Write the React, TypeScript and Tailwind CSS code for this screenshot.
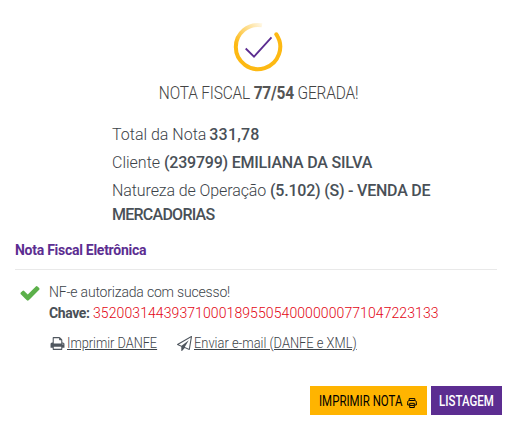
import React from 'react';

const CheckIcon = () => (
  <svg viewBox="0 0 1792 1792" className="w-[22px] h-[22px] shrink-0 fill-[#5cb04a]">
    <path d="M1671 566q0 40-28 68l-724 724-136 136q-28 28-68 28t-68-28l-136-136-362-362q-28-28-28-68t28-68l136-136q28-28 68-28t68 28l294 295 656-657q28-28 68-28t68 28l136 136q28 28 28 68z" />
  </svg>
);

const PrintIcon = () => (
  <svg viewBox="0 0 1792 1792" className="w-[15px] h-[15px] shrink-0 fill-[#4f565e]">
    <path d="M448 1536h896v-256h-896v256zm0-640h896v-384h-160q-40 0-68-28t-28-68v-160h-640v640zm1152 64q0-26-19-45t-45-19-45 19-19 45 19 45 45 19 45-19 19-45zm128 0v416q0 13-9.5 22.5t-22.5 9.5h-224v160q0 40-28 68t-68 28h-960q-40 0-68-28t-28-68v-160h-224q-13 0-22.5-9.5t-9.5-22.5v-416q0-79 56.5-135.5t135.5-56.5h64v-544q0-40 28-68t68-28h672q40 0 88 20t76 48l152 152q28 28 48 76t20 88v256h64q79 0 135.5 56.5t56.5 135.5z" />
  </svg>
);

const PlaneIcon = () => (
  <svg viewBox="0 0 1792 1792" className="w-[15px] h-[15px] shrink-0 fill-[#4f565e]">
    <path d="M1764 11q33 24 27 64l-256 1536q-5 29-32 45-14 8-31 8-11 0-24-5l-527-215-298 327q-18 21-47 21-14 0-23-4-19-7-30-23.5t-11-36.5v-452l-472-193q-37-14-40-55-3-39 32-59l1664-960q35-21 68 2zm-342 1499l221-1323-1434 827 336 137 863-639-478 797z" />
  </svg>
);

const SmallPrinter = () => (
  <svg viewBox="0 0 12 12" className="w-3 h-3 shrink-0 mt-[5px] fill-none stroke-black">
    <path d="M3.2 3.5V1.6h5.6v1.9M3 8H1.7V5.2c0-1 .6-1.7 1.6-1.7h5.4c1 0 1.6.7 1.6 1.7V8H9M3.7 6.3h4.6v4.2H3.7zM4 8.4h4" />
  </svg>
);

// Ring fades out towards its open end
const SuccessRing = () => (
  <svg viewBox="0 0 50 50" className="w-[50px] h-[50px] mr-0.5" fill="none">
    <defs>
      <linearGradient id="ring" x1="30" y1="3" x2="5" y2="24" gradientUnits="userSpaceOnUse">
        <stop offset="0" stopColor="#fdb913" stopOpacity="0.1" />
        <stop offset="1" stopColor="#fdb913" />
      </linearGradient>
    </defs>
    <path d="M29 3.3A22.2 22.2 0 0 0 2.8 25" stroke="url(#ring)" strokeWidth="4" />
    <path d="M2.8 25A22.2 22.2 0 1 0 43.3 12.3" stroke="#fdb913" strokeWidth="4" />
    <circle cx="43.3" cy="12.3" r="2" fill="#fdb913" />
    <path d="M12.7 26.5l8.3 8.2L38.5 15.3" stroke="#5c2d91" strokeWidth="1.8" />
  </svg>
);

const App: React.FC = () => {
  return (
    <main className="w-[517px] h-[426px] bg-white overflow-hidden font-['Roboto',sans-serif] text-[#495057]">
      <header className="flex flex-col items-center pt-[22px]">
        <SuccessRing />
        <h1 className="mt-[9px] origin-center scale-x-[.91] scale-y-105 text-[17px] leading-6 font-light text-[#444] whitespace-nowrap tracking-[-0.2px]">
          NOTA FISCAL <b className="font-bold text-[#555]">77/54</b> GERADA!
        </h1>
      </header>

      <section className="mt-[18px] ml-28 w-[350px] flex flex-col gap-1 text-base leading-6 font-light text-[#3c4349]">
        <p>Total da Nota <b className="-ml-px font-medium tracking-[0.2px] text-[#495057]">331,78</b></p>
        <p className="whitespace-nowrap">Cliente <b className="font-medium tracking-[-0.22px] text-[#495057]">(239799) EMILIANA DA SILVA</b></p>
        <p className="whitespace-nowrap">
          <span className="tracking-[-0.1px]">Natureza de Operação </span>
          <b className="font-medium tracking-[-0.22px] text-[#495057]">(5.102) (S) - VENDA DE<br /><span className="tracking-[-0.75px]">MERCADORIAS</span></b>
        </p>
      </section>

      <h2 className="ml-[15px] mr-5 mt-[11px] h-8 border-b border-[#e9e9e9] text-sm leading-6 font-bold tracking-[-0.27px] text-[#5c2d91]">
        Nota Fiscal Eletrônica
      </h2>

      <section className="flex gap-2 pl-[19px] pt-3">
        <CheckIcon />
        <div className="text-sm leading-[21px] font-light whitespace-nowrap text-[#3c4349]">
          <p className="tracking-[-0.18px]">NF-e autorizada com sucesso!</p>
          <p><b className="inline-block w-11 font-bold tracking-[-0.4px] text-[#495057]">Chave:</b><span className="text-[#e30613] tracking-[0.09px]">35200314439371000189550540000000771047223133</span></p>
          <div className="mt-[9px] ml-px flex">
            <a className="flex items-center gap-0.5 w-[127px]">
              <PrintIcon /><u className="origin-left scale-x-[.91]">Imprimir DANFE</u>
            </a>
            <a className="flex items-center gap-0.5">
              <PlaneIcon /><u className="origin-left scale-x-[.92]">Enviar e-mail (DANFE e XML)</u>
            </a>
          </div>
        </div>
      </section>

      <footer className="mt-8 pr-[15px] flex justify-end gap-1 text-sm whitespace-nowrap">
        <button className="w-[117px] h-[29px] pl-[9px] flex items-center bg-[#ffb400] text-black">
          <span className="w-[87px] text-left"><span className="inline-block origin-left scale-x-[.82] scale-y-105">IMPRIMIR NOTA</span></span>
          <SmallPrinter />
        </button>
        <button className="w-[71px] h-[29px] bg-[#5c2d91] text-white font-medium">
          <span className="inline-block scale-x-[.82] scale-y-105">LISTAGEM</span>
        </button>
      </footer>
    </main>
  );
};

export default App;
